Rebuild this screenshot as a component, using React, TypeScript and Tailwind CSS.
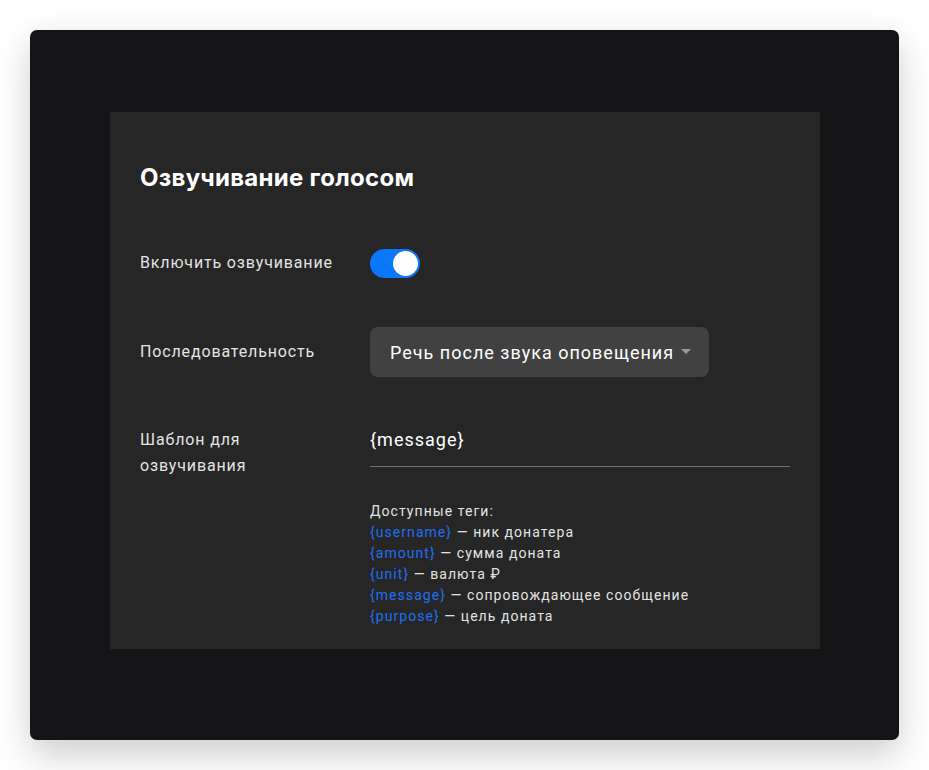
import React from 'react';

const tags = [
  { tag: '{username}', text: 'ник донатера' },
  { tag: '{amount}', text: 'сумма доната' },
  { tag: '{unit}', text: 'валюта ₽' },
  { tag: '{message}', text: 'сопровождающее сообщение' },
  { tag: '{purpose}', text: 'цель доната' },
];

const App = () => {
  return (
    <div className="w-[929px] h-[770px] bg-white pt-[30px] pl-[30px] font-['Roboto',sans-serif]">
      <div className="w-[869px] h-[710px] rounded-[7px] bg-[#141416] pt-[82px] pl-[80px] shadow-[0_18px_36px_rgba(0,0,0,0.16),0_0_30px_rgba(0,0,0,0.05)]">
        <div className="w-[710px] h-[537px] bg-[#262626] pl-[30px] pt-[51px]">
          <h1 className="font-['Inter',sans-serif] text-[24px] leading-[30px] font-bold text-white tracking-[0.3px]">
            Озвучивание голосом
          </h1>

          <div className="grid grid-cols-[230px_1fr] mt-[55px]">
            <div className="h-[30px] flex items-center text-[16px] tracking-[0.85px] text-[#e3e3e3]">Включить озвучивание</div>
            <div className="h-[30px] flex items-center">
              <div className="w-[50px] h-[29px] rounded-full bg-[#0b78fb] flex items-center justify-end pr-[2px]">
                <div className="w-[25px] h-[25px] rounded-full bg-white" />
              </div>
            </div>

            <div className="h-[50px] mt-[49px] flex items-center text-[16px] tracking-[0.85px] text-[#e3e3e3]">Последовательность</div>
            <div className="mt-[49px]">
              <div className="inline-flex items-center h-[50px] rounded-[8px] bg-[#414141] pl-[20px] pr-[18px] gap-[7px]">
                <span className="text-[18px] tracking-[1px] text-white">Речь после звука оповещения</span>
                <svg width="10" height="6" viewBox="0 0 10 6">
                  <path d="M0 0 L10 0 L5 5 Z" fill="#9a9a9a" />
                </svg>
              </div>
            </div>

            <div className="mt-[50px] text-[16px] leading-[26px] tracking-[0.85px] text-[#e3e3e3]">
              Шаблон для
              <br />
              озвучивания
            </div>
            <div className="mt-[50px] w-[420px]">
              <div className="h-[26px] text-[18px] leading-[26px] tracking-[1px] text-white">{'{message}'}</div>
              <div className="mt-[13px] h-px bg-[#727272]" />
              <div className="mt-[34px] text-[14px] leading-[21px] tracking-[1.05px] text-[#e3e3e3]">
                <div>Доступные теги:</div>
                {tags.map((t) => (
                  <div key={t.tag}>
                    <span className="text-[#1f6ff5]">{t.tag}</span> — {t.text}
                  </div>
                ))}
              </div>
            </div>
          </div>
        </div>
      </div>
    </div>
  );
};

export default App;
